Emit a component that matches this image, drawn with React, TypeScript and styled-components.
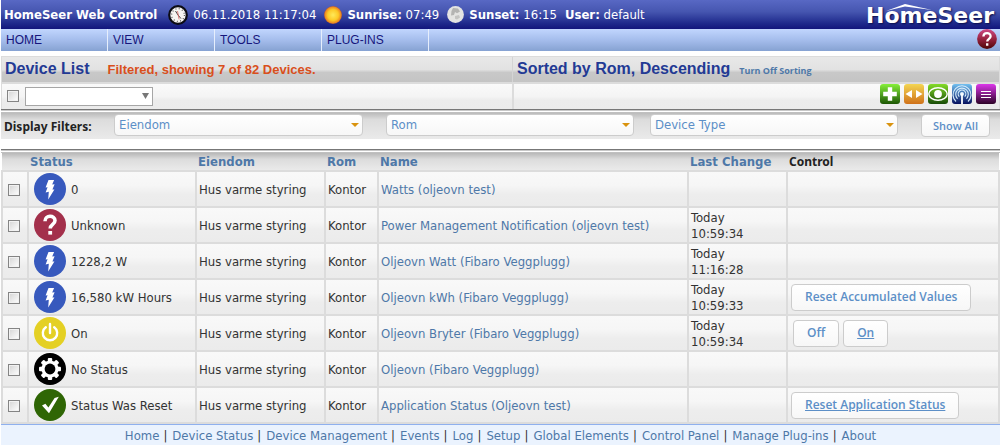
import React from 'react';
import styled, { createGlobalStyle, css } from 'styled-components';

const GlobalStyle = createGlobalStyle`
  *, *::before, *::after { box-sizing: border-box; }
  body {
    margin: 0;
    background: #fff;
    color: #333;
    font: 13px/16px "DejaVu Sans Condensed", "DejaVu Sans", Tahoma, sans-serif;
  }
  a { color: #4e78a8; text-decoration: none; }
`;

const Page = styled.div`
  padding-left: 1px;
`;

const TopBar = styled.header`
  display: flex;
  align-items: center;
  height: 29px;
  padding: 0 6px 0 3px;
  background: linear-gradient(#5868c4, #4656b0 40%, #1f2a8c 80%, #12167c);
  color: #fff;
  white-space: nowrap;
`;

const TopItem = styled.span<{ $gap?: number }>`
  margin-right: ${(p) => p.$gap ?? 0}px;
`;

const TopIcon = styled.svg<{ $size: number }>`
  flex: none;
  width: ${(p) => p.$size}px;
  height: ${(p) => p.$size}px;
  margin-right: 5px;
`;

const Logo = styled.div`
  position: relative;
  margin-left: auto;
  padding-top: 3px;
  font: bold 22px/26px "DejaVu Sans", Verdana, sans-serif;
  text-shadow: 1px 1px 2px #0a0d4a;
`;

const Roof = styled.svg`
  position: absolute;
  left: 20px;
  top: 4px;
  width: 46px;
  height: 7px;
`;

const MenuBar = styled.nav`
  display: flex;
  align-items: stretch;
  height: 22px;
  padding-right: 3px;
  background: linear-gradient(#c1d6fe, #a5bdec 50%, #86a2d2);
`;

const MenuLink = styled.a`
  width: 107px;
  padding: 3px 5px;
  border-right: 1px solid #e6eefc;
  color: #16167c;
  font: 12px/16px "Liberation Sans", Arial, sans-serif;
`;

const IconButton = styled.button`
  flex: none;
  display: block;
  width: 20px;
  height: 20px;
  padding: 0;
  border: 0;
  background: none;
  svg { display: block; width: 20px; height: 20px; }
`;

const HelpButton = styled(IconButton)`
  margin-left: auto;
`;

const Toolbar = styled.section`
  display: grid;
  grid-template-columns: 511fr 488fr;
  margin-top: 5px;
  border: solid #dcdcdc;
  border-width: 1px 1px 0 1px;
`;

const TitleCell = styled.div`
  display: flex;
  align-items: baseline;
  height: 25px;
  padding: 3px 3px 0;
  background: linear-gradient(#e8e8e8, #e2e2e2 50%, #c8c8c8 62%, #c4c4c4);
  white-space: nowrap;
  & + & { padding-left: 4px; border-left: 1px solid #d4d4d4; }
`;

const Title = styled.h1`
  margin: 0 18px 0 0;
  color: #233a94;
  font: bold 16px/18px "Liberation Sans", Arial, sans-serif;
`;

const SortTitle = styled(Title)`
  margin-right: 9px;
`;

const FilterNote = styled.span`
  color: #d94f1c;
  font: bold 13px/16px "Liberation Sans", Arial, sans-serif;
`;

const SortLink = styled.a`
  font: bold 9px/12px "Open Sans", "Trebuchet MS", sans-serif;
`;

const ToolCell = styled.div<{ $end?: boolean }>`
  display: flex;
  align-items: center;
  gap: ${(p) => (p.$end ? 4 : 6)}px;
  height: 27px;
  padding: 0 3px 1px 5px;
  border-top: 2px solid #dcdcdc;
  background: linear-gradient(#fafafa, #f4f4f4 50%, #ececec 65%, #ebebeb);
  ${(p) =>
    p.$end &&
    css`
      align-items: flex-start;
      justify-content: flex-end;
      border-left: 2px solid #dcdcdc;
    `}
`;

const Check = styled.input`
  appearance: none;
  display: block;
  flex: none;
  width: 12px;
  height: 12px;
  margin: 0;
  border: 1px solid #848484;
  background: linear-gradient(135deg, #d4d4d4, #fff);
  box-shadow: inset 0 0 0 1px #f2f2f2;
`;

const SelectBox = styled.span<{ $width?: number }>`
  display: grid;
  align-items: center;
  ${(p) => p.$width && `width: ${p.$width}px;`}
  > * { grid-area: 1 / 1; }
  svg {
    justify-self: end;
    margin-right: 4px;
    pointer-events: none;
  }
`;

const BulkSelect = styled.select`
  appearance: none;
  width: 100%;
  height: 19px;
  border: 1px solid #a6a6a6;
  border-radius: 0;
  background: #fff;
`;

const FilterSelect = styled.select`
  appearance: none;
  width: 100%;
  height: 22px;
  padding: 0 4px;
  border: 1px solid #ccc;
  border-radius: 4px;
  background: linear-gradient(#fff, #f7f7f7);
  color: #5c8fc7;
  font: 13px/16px "DejaVu Sans Condensed", Tahoma, sans-serif;
`;

const Rule = styled.div`
  height: 4px;
  background: linear-gradient(#777 25%, #c8c8c8 25% 50%, #fff 50% 75%, #c0c0c0 75%);
`;

const Filters = styled.section`
  display: grid;
  grid-template-columns: 90px 20px 249fr 23px 248fr 16px 248fr 23px 69px;
  align-items: start;
  height: 26px;
  margin-bottom: 10px;
  padding: 1px 10px 0 3px;
  background: linear-gradient(#bbb, #dcdcdc 25%, #eaeaea);
  > :nth-child(2) { grid-column: 3; }
  > :nth-child(3) { grid-column: 5; }
  > :nth-child(4) { grid-column: 7; }
  > :nth-child(5) { grid-column: 9; }
`;

const FiltersLabel = styled.strong`
  padding-top: 4px;
  color: #222;
  font: bold 12px/16px "Noto Sans", "Open Sans", sans-serif;
  padding-top: 5px;
  white-space: nowrap;
`;

const Button = styled.button<{ $underlined?: boolean }>`
  height: 27px;
  padding: 0 13px;
  border: 1px solid #ccc;
  border-radius: 4px;
  background: linear-gradient(#fff, #f7f7f7);
  color: #5c8fc7;
  font: 600 12px/16px "Open Sans", "Trebuchet MS", sans-serif;
  text-decoration: ${(p) => (p.$underlined ? 'underline' : 'none')};
  white-space: nowrap;
`;

const ShowAllButton = styled(Button)`
  height: 23px;
  padding: 0;
  font-size: 11px;
`;

const ButtonGroup = styled.div`
  display: flex;
  gap: 4px;
  padding-left: 2px;
`;

const Table = styled.table`
  width: 100%;
  table-layout: fixed;
  border-collapse: collapse;
`;

const HeadRow = styled.tr`
  height: 18px;
  background: linear-gradient(#b8b8b8, #dcdcdc 35%, #ebebeb);
`;

const HeadCell = styled.th<{ $plain?: boolean }>`
  padding: 1px 2px 0;
  text-align: left;
  color: #222;
  white-space: nowrap;
  ${(p) => p.$plain && 'font: bold 12px/16px "Noto Sans", "Open Sans", sans-serif;'}
`;

const Row = styled.tr`
  height: 36px;
  background: linear-gradient(#f9f9f9, #f6f6f6 40%, #ededed 65%, #ebebeb);
`;

const Cell = styled.td`
  padding: 2px 2px 0;
  border: 2px solid #dcdcdc;
  vertical-align: middle;
`;

const CheckCell = styled(Cell)`
  padding-left: 5px;
`;

const StatusCell = styled(Cell)`
  padding: 0 2px;
`;

const ControlCell = styled(Cell)`
  padding: 0 3px;
`;

const Status = styled.div`
  display: flex;
  align-items: center;
  gap: 5px;
  padding-left: 3px;
  white-space: nowrap;
  svg { flex: none; width: 32px; height: 32px; }
  span { padding-top: 2px; }
`;

const Footer = styled.footer`
  display: flex;
  justify-content: center;
  gap: 4px;
  height: 22px;
  padding-top: 3px;
  border-top: 1px solid #8fb0ee;
  border-bottom: 1px solid #6079a8;
  background: #ebf3fe;
  white-space: nowrap;
`;

const Separator = styled.span`
  margin-right: 1px;
`;

type Glyph = 'bolt' | 'question' | 'power' | 'gear' | 'check';

const glyphFill: Record<Glyph, string> = {
  bolt: '#3759bd',
  question: '#a3304b',
  power: '#e4d024',
  gear: '#000',
  check: '#2f6605',
};

function StatusIcon({ glyph }: { glyph: Glyph }) {
  return (
    <svg viewBox="0 0 32 32" aria-hidden="true">
      <circle cx="16" cy="16" r="16" fill={glyphFill[glyph]} />
      {glyph === 'bolt' && (
        <path d="M14.5 7h5.600l-1.900 4.500 2.400-.2-2.200 5.200 2 .1L14.200 26.500l.6-7.700-3.200.6 2-5.200-2 .2z" fill="#fff" />
      )}
      {glyph === 'question' && (
        <g fill="none" stroke="#fff" strokeWidth="3.6">
          <path d="M11 12.2C11 5.6 21 5.8 21 11.6c0 4-4.8 3.6-4.8 8" />
          <path d="M14.3 23.8h3.8" />
        </g>
      )}
      {glyph === 'power' && (
        <g fill="none" stroke="#fff" strokeWidth="2.4" strokeLinecap="round">
          <path d="M11.8 10.2a7.2 7.2 0 1 0 8.4 0" />
          <path d="M16 7v9" />
        </g>
      )}
      {glyph === 'gear' && (
        <g>
          {[0, 45, 90, 135].map((angle) => (
            <rect key={angle} x="13.8" y="5" width="4.4" height="22" rx="1" fill="#fff" transform={`rotate(${angle} 16 16)`} />
          ))}
          <circle cx="16" cy="16" r="8.6" fill="#fff" />
          <circle cx="16" cy="16" r="5.4" fill="#000" />
        </g>
      )}
      {glyph === 'check' && (
        <path d="M8 16.6l3.4-1.800 3 3.800L20.600 9l4.200-1.200L15 24.200z" fill="#fff" />
      )}
    </svg>
  );
}

function Caret({ color, width, height }: { color: string; width: number; height: number }) {
  return (
    <svg width={width} height={height} viewBox="0 0 8 5" preserveAspectRatio="none" aria-hidden="true">
      <path d="M0 0h8L4 5z" fill={color} />
    </svg>
  );
}

function ClockIcon() {
  return (
    <TopIcon $size={20} viewBox="0 0 20 20" aria-hidden="true">
      <circle cx="10" cy="10" r="8.8" fill="#f6f4f2" stroke="#0c0c14" strokeWidth="2.2" />
      <circle cx="10" cy="10" r="6.4" fill="none" stroke="#555" strokeWidth="1.3" strokeDasharray=".9 2.45" />
      <path d="M10 10L7.500 6M10 10l3 3.600" stroke="#444" strokeWidth="1" />
      <path d="M9.5 6l1.6 8.4" stroke="#d66" strokeWidth=".8" />
    </TopIcon>
  );
}

function SunIcon() {
  return (
    <TopIcon $size={18} viewBox="0 0 18 18" aria-hidden="true">
      <defs>
        <radialGradient id="sun">
          <stop offset="0" stopColor="#ffe95a" />
          <stop offset=".6" stopColor="#fdc926" />
          <stop offset=".88" stopColor="#ec8b22" />
          <stop offset="1" stopColor="#a85440" />
        </radialGradient>
      </defs>
      <circle cx="9" cy="9" r="9" fill="url(#sun)" />
    </TopIcon>
  );
}

function MoonIcon() {
  return (
    <TopIcon $size={17} viewBox="0 0 17 17" aria-hidden="true">
      <circle cx="8.5" cy="8.5" r="8.4" fill="#e4e4e2" />
      <path d="M6 2l5 .6 2 3-3 1.6-2-1.2-1 3-3 .4L4.5 5z" fill="#b4b4b2" />
      <path d="M8 10l4-1 1 2.5-3 2-2-.8z" fill="#c4c4c2" />
    </TopIcon>
  );
}

function HelpIcon() {
  return (
    <svg viewBox="0 0 20 20" aria-hidden="true">
      <defs>
        <linearGradient id="help" x2="0" y2="1">
          <stop offset="0" stopColor="#cf4a86" />
          <stop offset=".5" stopColor="#98223f" />
          <stop offset="1" stopColor="#4e0606" />
        </linearGradient>
      </defs>
      <circle cx="10" cy="10" r="9.9" fill="url(#help)" />
      <path d="M6.4 7.6C6.4 3 13.6 3 13.6 7.2c0 2.6-3.4 2.6-3.4 5.4M10.2 14.2v2.6" fill="none" stroke="#fff" strokeWidth="2.3" />
    </svg>
  );
}

type Tool = { label: string; from: string; to: string; art: React.ReactNode };

const tools: Tool[] = [
  {
    label: 'Add device',
    from: '#86f03a',
    to: '#1c5604',
    art: <path d="M10 3.2v13.6M3.2 10h13.6" stroke="#fff" strokeWidth="4.4" />,
  },
  {
    label: 'Expand columns',
    from: '#f3d552',
    to: '#d0721a',
    art: <path d="M8 6v8L1.5 10zM12 6v8l6.5-4z" fill="#fff" />,
  },
  {
    label: 'Show hidden',
    from: '#84dc28',
    to: '#174a06',
    art: (
      <g>
        <ellipse cx="10" cy="10" rx="9.2" ry="6.2" fill="none" stroke="#fff" strokeWidth="1.4" />
        <circle cx="10" cy="10" r="3.9" fill="#fff" />
      </g>
    ),
  },
  {
    label: 'Locations',
    from: '#72c0f0',
    to: '#06105e',
    art: (
      <g fill="none" stroke="#d6ebfa" strokeWidth="1.1">
        <path d="M4 17.5a9 9 0 1 1 12 0" />
        <path d="M5.5 14.8a6.3 6.3 0 1 1 9 0" />
        <path d="M7.3 12.6a3.8 3.8 0 1 1 5.4 0" />
        <circle cx="10" cy="10" r="1.5" fill="#fff" />
        <path d="M10 10v10" stroke="#fff" strokeWidth="1.8" />
      </g>
    ),
  },
  {
    label: 'Menu',
    from: '#dc36ea',
    to: '#2c0226',
    art: <path d="M5 7.5h10M5 10.5h10M5 13.5h10" stroke="#fff" strokeWidth="1" />,
  },
];

function ToolIcon({ tool, id }: { tool: Tool; id: string }) {
  return (
    <svg viewBox="0 0 20 20" aria-hidden="true">
      <defs>
        <linearGradient id={id} x2="0" y2="1">
          <stop offset="0" stopColor={tool.from} />
          <stop offset="1" stopColor={tool.to} />
        </linearGradient>
      </defs>
      <rect width="20" height="20" rx="3" fill={`url(#${id})`} />
      {tool.art}
    </svg>
  );
}

type Device = {
  glyph: Glyph;
  status: string;
  name: string;
  time?: string;
  control?: React.ReactNode;
};

const devices: Device[] = [
  { glyph: 'bolt', status: '0', name: 'Watts (oljeovn test)' },
  { glyph: 'question', status: 'Unknown', name: 'Power Management Notification (oljeovn test)', time: '10:59:34' },
  { glyph: 'bolt', status: '1228,2 W', name: 'Oljeovn Watt (Fibaro Veggplugg)', time: '11:16:28' },
  {
    glyph: 'bolt',
    status: '16,580 kW Hours',
    name: 'Oljeovn kWh (Fibaro Veggplugg)',
    time: '10:59:33',
    control: <Button>Reset Accumulated Values</Button>,
  },
  {
    glyph: 'power',
    status: 'On',
    name: 'Oljeovn Bryter (Fibaro Veggplugg)',
    time: '10:59:34',
    control: (
      <ButtonGroup>
        <Button>Off</Button>
        <Button $underlined>On</Button>
      </ButtonGroup>
    ),
  },
  { glyph: 'gear', status: 'No Status', name: 'Oljeovn (Fibaro Veggplugg)' },
  {
    glyph: 'check',
    status: 'Status Was Reset',
    name: 'Application Status (Oljeovn test)',
    control: <Button $underlined>Reset Application Status</Button>,
  },
];

const footerLinks = [
  'Home', 'Device Status', 'Device Management', 'Events', 'Log', 'Setup',
  'Global Elements', 'Control Panel', 'Manage Plug-ins', 'About',
];

export default function App() {
  return (
    <Page>
      <GlobalStyle />
      <TopBar>
        <TopItem $gap={11}><strong>HomeSeer Web Control</strong></TopItem>
        <ClockIcon />
        <TopItem $gap={8}>06.11.2018 11:17:04</TopItem>
        <SunIcon />
        <TopItem $gap={8}><strong>Sunrise:</strong> 07:49</TopItem>
        <MoonIcon />
        <TopItem $gap={8}><strong>Sunset:</strong> 16:15</TopItem>
        <TopItem><strong>User:</strong> default</TopItem>
        <Logo>
          <Roof viewBox="0 0 46 7" aria-hidden="true">
            <path d="M0 7L19 0l27 6L19 2.600z" fill="#fff" />
          </Roof>
          HomeSeer
        </Logo>
      </TopBar>
      <MenuBar>
        {['HOME', 'VIEW', 'TOOLS', 'PLUG-INS'].map((item) => (
          <MenuLink key={item} href="#">{item}</MenuLink>
        ))}
        <HelpButton aria-label="Help"><HelpIcon /></HelpButton>
      </MenuBar>

      <Toolbar>
        <TitleCell>
          <Title>Device List</Title>
          <FilterNote>Filtered, showing 7 of 82 Devices.</FilterNote>
        </TitleCell>
        <TitleCell>
          <SortTitle as="h2">Sorted by Rom, Descending</SortTitle>
          <SortLink href="#">Turn Off Sorting</SortLink>
        </TitleCell>
        <ToolCell>
          <Check type="checkbox" aria-label="Select all devices" />
          <SelectBox $width={128}>
            <BulkSelect aria-label="Bulk action"><option /></BulkSelect>
            <Caret color="#777" width={7} height={6} />
          </SelectBox>
        </ToolCell>
        <ToolCell $end>
          {tools.map((tool, i) => (
            <IconButton key={tool.label} aria-label={tool.label}>
              <ToolIcon tool={tool} id={`tool-${i}`} />
            </IconButton>
          ))}
        </ToolCell>
      </Toolbar>

      <Rule />
      <Filters>
        <FiltersLabel>Display Filters:</FiltersLabel>
        {['Eiendom', 'Rom', 'Device Type'].map((name) => (
          <SelectBox key={name}>
            <FilterSelect aria-label={name}><option>{name}</option></FilterSelect>
            <Caret color="#d9930f" width={8} height={4} />
          </SelectBox>
        ))}
        <ShowAllButton>Show All</ShowAllButton>
      </Filters>

      <Rule />
      <Table>
        <colgroup>
          <col style={{ width: 26 }} />
          <col style={{ width: 168 }} />
          <col style={{ width: 129 }} />
          <col style={{ width: 53 }} />
          <col />
          <col style={{ width: 99 }} />
          <col style={{ width: 212 }} />
        </colgroup>
        <thead>
          <HeadRow>
            <HeadCell />
            {['Status', 'Eiendom', 'Rom', 'Name', 'Last Change'].map((name) => (
              <HeadCell key={name}><a href="#">{name}</a></HeadCell>
            ))}
            <HeadCell $plain>Control</HeadCell>
          </HeadRow>
        </thead>
        <tbody>
          {devices.map((device) => (
            <Row key={device.name}>
              <CheckCell><Check type="checkbox" aria-label={`Select ${device.name}`} /></CheckCell>
              <StatusCell>
                <Status><StatusIcon glyph={device.glyph} /><span>{device.status}</span></Status>
              </StatusCell>
              <Cell>Hus varme styring</Cell>
              <Cell>Kontor</Cell>
              <Cell><a href="#">{device.name}</a></Cell>
              <Cell>{device.time && <>Today<br />{device.time}</>}</Cell>
              <ControlCell>{device.control}</ControlCell>
            </Row>
          ))}
        </tbody>
      </Table>
      <Footer>
        {footerLinks.map((link, i) => (
          <React.Fragment key={link}>
            {i > 0 && <Separator>|</Separator>}
            <a href="#">{link}</a>
          </React.Fragment>
        ))}
      </Footer>
    </Page>
  );
}
